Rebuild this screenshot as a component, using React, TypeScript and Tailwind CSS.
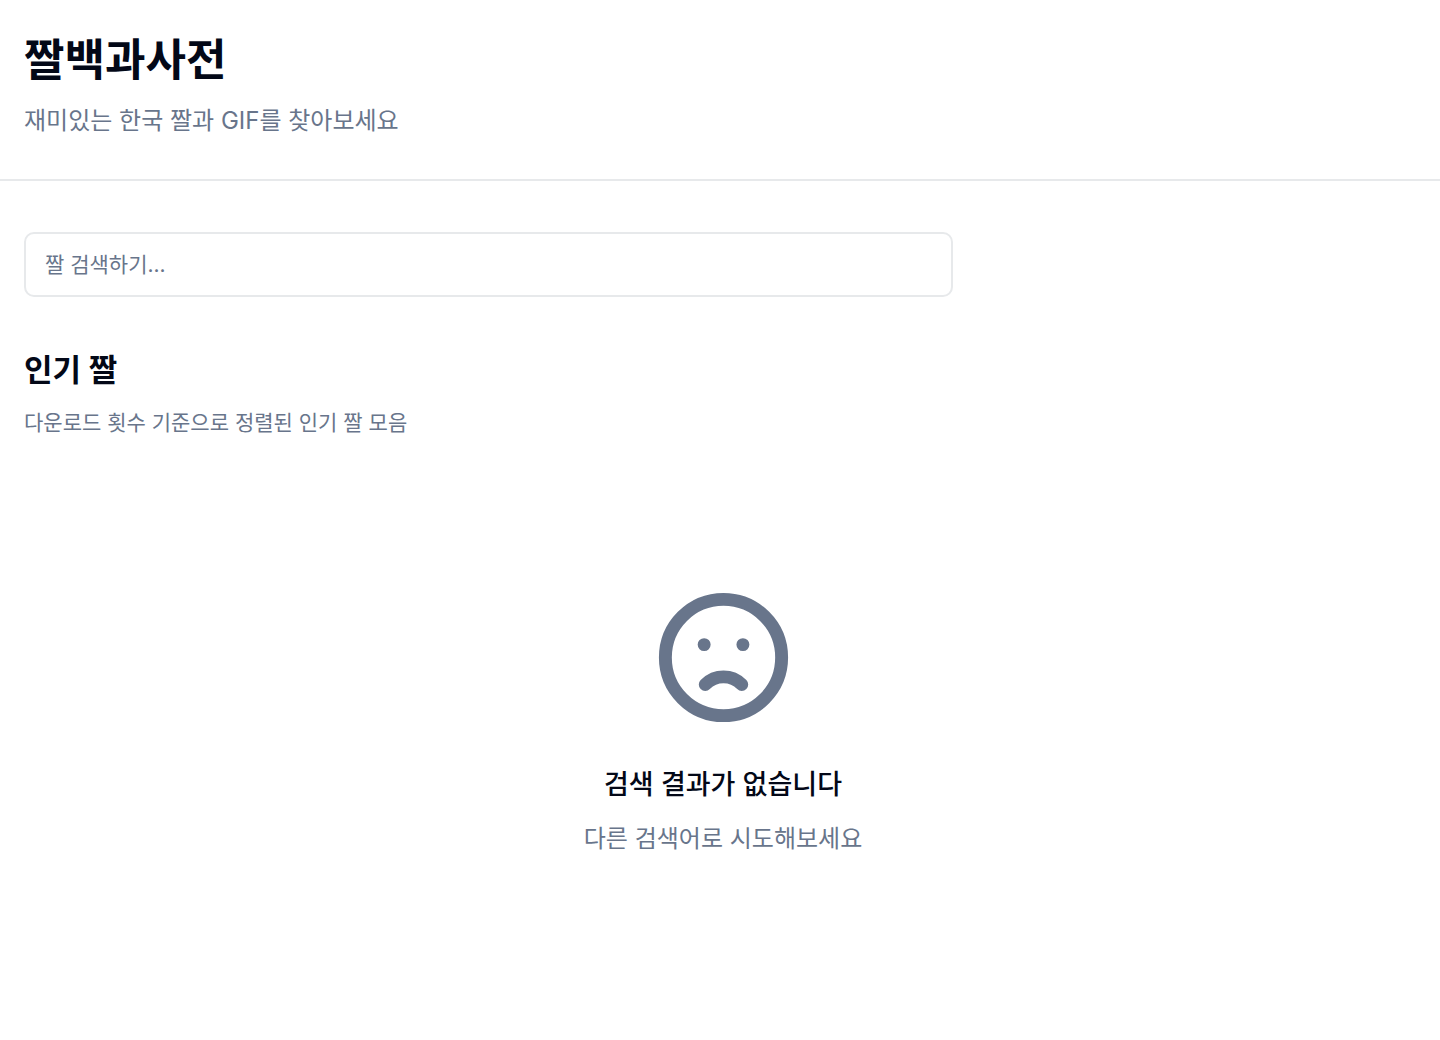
import { useState } from "react";

function FrownIcon() {
  return (
    <svg
      className="size-[155px] text-[#68758b]"
      viewBox="0 0 24 24"
      fill="none"
      stroke="currentColor"
      strokeWidth={2}
      strokeLinecap="round"
      strokeLinejoin="round"
      aria-hidden="true"
    >
      <path d="M9.172 16.172a4 4 0 015.656 0M9 10h.01M15 10h.01M21 12a9 9 0 11-18 0 9 9 0 0118 0z" />
    </svg>
  );
}

function EmptyState() {
  return (
    <div className="flex flex-col items-center text-center">
      <FrownIcon />
      <h3 className="mt-[30px] text-[27px] leading-10 font-medium">검색 결과가 없습니다</h3>
      <p className="mt-4 text-[24px] leading-9 text-[#68758b]">다른 검색어로 시도해보세요</p>
    </div>
  );
}

export default function App() {
  const [query, setQuery] = useState("");

  return (
    <div className="min-h-screen bg-white font-[Inter,'Noto_Sans_CJK_KR',sans-serif] text-[#030817]">
      <header className="border-b-2 border-[#e7e9eb] px-6 pt-8 pb-10">
        <h1 className="text-[44px] leading-[56px] font-bold">짤백과사전</h1>
        <p className="mt-[15px] text-[24px] leading-9 text-[#68758b]">
          재미있는 한국 짤과 GIF를 찾아보세요
        </p>
      </header>
      <main className="pt-[51px] pr-[18px] pb-12 pl-6">
        <input
          type="search"
          aria-label="짤 검색"
          value={query}
          onChange={(e) => setQuery(e.target.value)}
          placeholder="짤 검색하기..."
          className="block h-[65px] w-full max-w-[929px] rounded-[10px] border-2 border-[#e7e9eb] px-[19px] text-[21px] outline-none placeholder:text-[#68758b]"
        />
        <section className="mt-12">
          <h2 className="text-[31px] leading-[50px] font-semibold">인기 짤</h2>
          <p className="mt-3 mb-[141px] text-[21px] leading-8 text-[#68758b]">
            다운로드 횟수 기준으로 정렬된 인기 짤 모음
          </p>
          <EmptyState />
        </section>
      </main>
    </div>
  );
}
